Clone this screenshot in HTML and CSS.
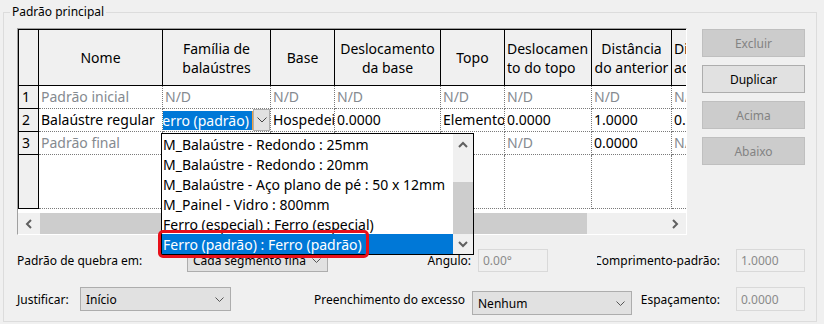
FILE: index.html
```html
<!DOCTYPE html>
<html lang="pt">

<head>
    <meta charset="UTF-8">
    <title>Padrão principal</title>
    <link rel="stylesheet" href="styles.css">
</head>

<body>
    <fieldset class="group">
        <legend class="group-title">Padrão principal</legend>
        <div class="top">
            <div class="grid-frame">
                <div class="grid-view">
                    <table class="grid">
                        <colgroup>
                            <col class="c-num">
                            <col class="c-nome">
                            <col class="c-familia">
                            <col class="c-base">
                            <col class="c-dbase">
                            <col class="c-topo">
                            <col class="c-dtopo">
                            <col class="c-dist">
                            <col class="c-extra">
                        </colgroup>
                        <thead>
                            <tr>
                                <th class="num"></th>
                                <th>Nome</th>
                                <th>Família de<br>balaústres</th>
                                <th>Base</th>
                                <th>Deslocamento<br>da base</th>
                                <th>Topo</th>
                                <th class="left">Deslocamen<br>to do topo</th>
                                <th>Distância<br>do anterior</th>
                                <th class="left">Distância<br>ao seguinte</th>
                            </tr>
                        </thead>
                        <tbody>
                            <tr>
                                <td class="num">1</td>
                                <td class="muted">Padrão inicial</td>
                                <td class="muted">N/D</td>
                                <td class="muted">N/D</td>
                                <td class="muted">N/D</td>
                                <td class="muted">N/D</td>
                                <td class="muted">N/D</td>
                                <td class="muted">N/D</td>
                                <td class="muted">N/D</td>
                            </tr>
                            <tr>
                                <td class="num">2</td>
                                <td>Balaústre regular</td>
                                <td class="editing">
                                    <div class="edit">
                                        <div class="edit-text">Ferro (padrão)</div>
                                        <span class="edit-btn">
                                            <svg width="10" height="6" viewBox="0 0 10 6"><polyline points="0.5,0.5 5,5 9.5,0.5" fill="none" stroke="#444" stroke-width="1"/></svg>
                                        </span>
                                    </div>
                                </td>
                                <td>Hospedeiro</td>
                                <td>0.0000</td>
                                <td>Elemento</td>
                                <td>0.0000</td>
                                <td>1.0000</td>
                                <td>0.0000</td>
                            </tr>
                            <tr>
                                <td class="num">3</td>
                                <td class="muted">Padrão final</td>
                                <td></td>
                                <td></td>
                                <td></td>
                                <td></td>
                                <td class="muted">N/D</td>
                                <td>0.0000</td>
                                <td class="muted">N/D</td>
                            </tr>
                            <tr class="filler">
                                <td class="num"></td>
                                <td></td>
                                <td></td>
                                <td></td>
                                <td></td>
                                <td></td>
                                <td></td>
                                <td></td>
                                <td></td>
                            </tr>
                        </tbody>
                    </table>
                </div>
                <div class="hscroll">
                    <span class="sb-btn">
                        <svg width="8" height="10" viewBox="0 0 8 10"><polyline points="6,1 2,5 6,9" fill="none" stroke="#606060" stroke-width="2"/></svg>
                    </span>
                    <span class="sb-thumb"></span>
                    <span class="sb-track"></span>
                    <span class="sb-btn">
                        <svg width="8" height="10" viewBox="0 0 8 10"><polyline points="2,1 6,5 2,9" fill="none" stroke="#606060" stroke-width="2"/></svg>
                    </span>
                </div>

                <div class="droplist">
                    <div class="items">
                        <div class="item">M_Balaústre - Redondo : 25mm</div>
                        <div class="item">M_Balaústre - Redondo : 20mm</div>
                        <div class="item">M_Balaústre - Aço plano de pé : 50 x 12mm</div>
                        <div class="item">M_Painel - Vidro : 800mm</div>
                        <div class="item">Ferro (especial) : Ferro (especial)</div>
                        <div class="item sel">Ferro (padrão) : Ferro (padrão)</div>
                    </div>
                    <div class="vscroll">
                        <span class="vs-btn">
                            <svg width="10" height="7" viewBox="0 0 10 7"><polyline points="1,6 5,2 9,6" fill="none" stroke="#606060" stroke-width="2"/></svg>
                        </span>
                        <span class="vs-track"></span>
                        <span class="vs-thumb"></span>
                        <span class="vs-btn">
                            <svg width="10" height="7" viewBox="0 0 10 7"><polyline points="1,1 5,5 9,1" fill="none" stroke="#606060" stroke-width="2"/></svg>
                        </span>
                    </div>
                    <div class="callout"></div>
                </div>
            </div>

            <div class="buttons">
                <button class="btn" disabled>Excluir</button>
                <button class="btn">Duplicar</button>
                <button class="btn" disabled>Acima</button>
                <button class="btn" disabled>Abaixo</button>
            </div>
        </div>

        <div class="form-row row-break">
            <span class="label w-break">Padrão de quebra em:</span>
            <div class="select w-seg">
                <span class="select-text">Cada segmento final</span>
                <svg width="9" height="5" viewBox="0 0 9 5"><polyline points="0.5,0.5 4.5,4.5 8.5,0.5" fill="none" stroke="#555" stroke-width="1"/></svg>
            </div>
            <span class="label right w-angle">Ângulo:</span>
            <div class="field w-ang">0.00°</div>
            <span class="label right w-len"><span>Comprimento-padrão:</span></span>
            <div class="field w-num">1.0000</div>
        </div>

        <div class="form-row row-just">
            <span class="label w-just">Justificar:</span>
            <div class="select w-start">
                <span class="select-text">Início</span>
                <svg width="9" height="5" viewBox="0 0 9 5"><polyline points="0.5,0.5 4.5,4.5 8.5,0.5" fill="none" stroke="#555" stroke-width="1"/></svg>
            </div>
            <span class="label right w-fill">Preenchimento do excesso</span>
            <div class="select w-none">
                <span class="select-text">Nenhum</span>
                <svg width="9" height="5" viewBox="0 0 9 5"><polyline points="0.5,0.5 4.5,4.5 8.5,0.5" fill="none" stroke="#555" stroke-width="1"/></svg>
            </div>
            <span class="label right w-space">Espaçamento:</span>
            <div class="field w-num">0.0000</div>
        </div>
    </fieldset>
</body>

</html>
```

FILE: styles.css
```css
body {
    margin: 0;
    background: #f0f0f0;
    font-family: "Noto Sans", sans-serif;
    font-size: 12px;
    color: #000;
}

.group {
    margin: 4px 7px 2px 3px;
    padding: 8px 11px 10px 13px;
    border: 1px solid #dcdcdc;
    min-width: 0;
}

.group-title {
    margin-left: -7px;
    padding: 0 2px;
    line-height: 16px;
}

.top {
    display: flex;
    gap: 15px;
    align-items: flex-start;
}

/* grid */
.grid-frame {
    position: relative;
    width: 668px;
    border: 1px solid;
    border-color: #a0a0a0 #ffffff #ffffff #a0a0a0;
}

.grid-view {
    height: 184px;
    overflow: hidden;
    background: #fff;
}

.grid {
    border-collapse: collapse;
    table-layout: fixed;
    width: 743px;
    font-size: 14px;
}

.c-num { width: 20px; }
.c-nome { width: 124px; }
.c-familia { width: 108px; }
.c-base { width: 64px; }
.c-dbase { width: 106px; }
.c-topo { width: 64px; }
.c-dtopo { width: 87px; }
.c-dist { width: 80px; }
.c-extra { width: 90px; }

.grid th {
    height: 55px;
    padding: 0 2px;
    border: 1px solid #000;
    background: #f0f0f0;
    font-weight: normal;
    line-height: 19px;
    white-space: nowrap;
    overflow: hidden;
}

.grid th.left {
    text-align: left;
}

.grid td {
    height: 22px;
    padding: 0 0 0 2px;
    border: 1px dotted #7a7a7a;
    white-space: nowrap;
    overflow: hidden;
    line-height: 20px;
}

.grid td.num {
    padding-left: 3px;
    background: #f0f0f0;
    border: 1px solid #000;
}

.grid .filler td {
    height: 53px;
}

.grid td.muted {
    color: #858a90;
}

.grid td.editing {
    padding: 0;
}

.edit {
    display: flex;
    align-items: center;
    height: 22px;
}

.edit-text {
    flex: 1;
    min-width: 0;
    height: 19px;
    overflow: hidden;
    border-right: 1px solid #f0a040;
    background: #0078d7;
    color: #fff;
    line-height: 19px;
    text-indent: -8px;
    white-space: nowrap;
}

.edit-btn {
    display: flex;
    align-items: center;
    justify-content: center;
    width: 17px;
    height: 22px;
    border: 1px solid #adadad;
    box-sizing: border-box;
    background: #e1e1e1;
}

.hscroll {
    display: flex;
    height: 21px;
    background: #f0f0f0;
}

.sb-btn {
    display: flex;
    align-items: center;
    justify-content: center;
    width: 22px;
}

.sb-thumb {
    width: 547px;
    background: #cdcdcd;
}

.sb-track {
    flex: 1;
}

/* open list */
.droplist {
    position: absolute;
    left: 143px;
    top: 104px;
    z-index: 2;
    display: flex;
    width: 311px;
    height: 120px;
    border: 1px solid #000;
    background: #fff;
    font-size: 14px;
}

.items {
    flex: 1;
    min-width: 0;
}

.item {
    height: 20px;
    padding-left: 1px;
    line-height: 22px;
    white-space: nowrap;
    overflow: hidden;
}

.item.sel {
    background: #0078d7;
    color: #fff;
}

.vscroll {
    display: flex;
    flex-direction: column;
    width: 20px;
    background: #f0f0f0;
}

.vs-btn {
    display: flex;
    align-items: center;
    justify-content: center;
    height: 20px;
}

.vs-track {
    height: 28px;
}

.vs-thumb {
    height: 52px;
    background: #cdcdcd;
}

.callout {
    position: absolute;
    left: -4px;
    top: 96px;
    width: 211px;
    height: 28px;
    box-sizing: border-box;
    border: 3px solid #e8101a;
    border-radius: 5px;
}

/* side buttons */
.buttons {
    display: flex;
    flex-direction: column;
    gap: 8px;
    width: 103px;
    margin-top: 1px;
}

.btn {
    height: 28px;
    border: 1px solid #adadad;
    background: #e1e1e1;
    font-family: inherit;
    font-size: 12px;
    color: #000;
    padding: 0;
}

.btn:disabled {
    border-color: #bfbfbf;
    background: #cccccc;
    color: #838383;
}

/* lower form */
.form-row {
    display: flex;
    align-items: center;
}

.row-break {
    height: 23px;
    margin-top: 14px;
}

.row-just {
    height: 24px;
    margin-top: 15px;
}

.label {
    white-space: nowrap;
}

.label.right {
    display: flex;
    justify-content: flex-end;
    overflow: hidden;
}

.select {
    display: flex;
    align-items: center;
    gap: 6px;
    height: 100%;
    box-sizing: border-box;
    padding: 0 6px 0 5px;
    border: 1px solid #adadad;
    background: #e1e1e1;
}

.select-text {
    flex: 1;
    min-width: 0;
    overflow: hidden;
    white-space: nowrap;
}

.field {
    display: flex;
    align-items: center;
    height: 100%;
    box-sizing: border-box;
    padding-left: 4px;
    border: 1px solid #d9d9d9;
    background: #f0f0f0;
    color: #8a8a8a;
}

.w-break { width: 170px; }
.w-seg { width: 141px; }
.w-angle { width: 143px; margin-right: 7px; }
.w-ang { width: 70px; }
.w-len { width: 123px; margin-left: 49px; margin-right: 16px; }
.w-num { width: 69px; }

.w-just { width: 63px; }
.w-start { width: 151px; }
.w-fill { width: 234px; margin-right: 7px; }
.w-none { width: 160px; height: 24px; margin-top: 8px; }
.w-space { width: 88px; margin-right: 16px; }
```
